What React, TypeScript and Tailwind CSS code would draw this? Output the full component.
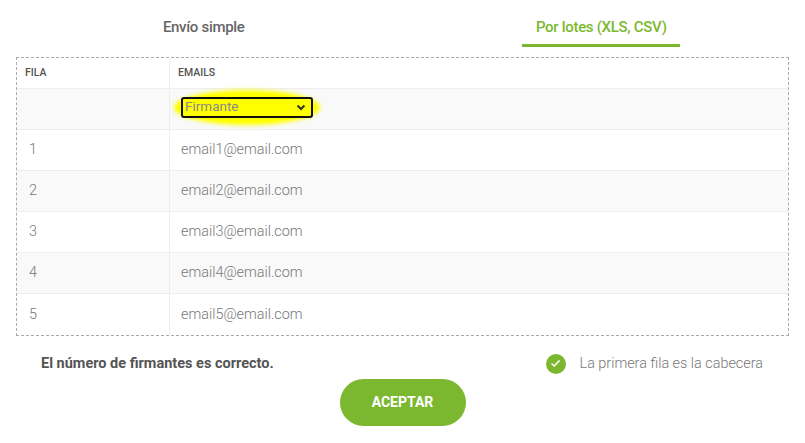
import React from "react";

const rows = [1, 2, 3, 4, 5];

export default function App() {
  return (
    <div
      className="w-[805px] h-[443px] bg-white overflow-hidden"
      style={{ fontFamily: "Roboto, 'Noto Sans', sans-serif" }}
    >
      {/* Tabs */}
      <div className="grid grid-cols-2 h-[47px] px-[5px]">
        <div className="flex flex-col items-center">
          <div className="h-[44px] flex items-center pt-[10px] text-[15px] font-medium text-[#666] tracking-[-0.3px]">
            Envío simple
          </div>
        </div>
        <div className="flex flex-col items-center">
          <div className="h-[44px] flex items-center pt-[10px] text-[15px] font-medium text-[#7cb82f] tracking-[-0.3px]">
            Por lotes (XLS, CSV)
          </div>
          <div className="w-[158px] h-[3px] bg-[#7cb82f]" />
        </div>
      </div>

      {/* Table */}
      <div className="mt-[10px] mx-[16px] w-[773px] border border-dashed border-[#aaa]">
        <div className="flex h-[31px] border-b border-[#eee] text-[10.5px] font-medium text-[#555] uppercase">
          <div className="w-[153px] border-r border-[#eee] flex items-center pl-[8px]">FILA</div>
          <div className="flex-1 flex items-center pl-[8px]">EMAILS</div>
        </div>
        <div className="flex h-[41px] border-b border-[#eee] bg-[#f9f9f9]">
          <div className="w-[153px] border-r border-[#eee]" />
          <div className="flex-1 flex items-center pl-[7px]">
            <div className="rounded-[50%] bg-[#ffff00] p-[4px] mb-[4px] shadow-[0_0_4px_3px_#ffff00]">
              <div className="w-[132px] h-[21px] rounded-[3px] border-2 border-[#111] bg-[#ffff00] flex items-center justify-between pl-[2px] pr-[5px]">
                <span className="text-[13.5px] text-[#888] leading-none">Firmante</span>
                <svg width="10" height="7" viewBox="0 0 10 7">
                  <path d="M1.5 1.5 L5 5 L8.5 1.5" fill="none" stroke="#333" strokeWidth="2" />
                </svg>
              </div>
            </div>
          </div>
        </div>
        {rows.map((n, i) => (
          <div
            key={n}
            className={`flex h-[41px] text-[14.4px] text-[#777] font-light ${i < 4 ? "border-b border-[#eee]" : ""} ${i % 2 === 1 ? "bg-[#f9f9f9]" : "bg-white"}`}
          >
            <div className="w-[153px] border-r border-[#eee] flex items-center pl-[12px]">{n}</div>
            <div className="flex-1 flex items-center pl-[11px]">email{n}@email.com</div>
          </div>
        ))}
      </div>

      {/* Footer */}
      <div className="flex items-center justify-between pl-[41px] pr-[42px] mt-[17px] h-[22px]">
        <span className="text-[14.5px] font-bold text-[#555]">El número de firmantes es correcto.</span>
        <div className="flex items-center gap-[14px]">
          <div className="w-[20px] h-[20px] rounded-full bg-[#7cb82f] flex items-center justify-center">
            <svg width="11" height="9" viewBox="0 0 11 9">
              <path d="M1.5 4.5 L4.2 7 L9.5 1.5" fill="none" stroke="#fff" strokeWidth="1.6" />
            </svg>
          </div>
          <span className="text-[14.4px] font-light text-[#777]">La primera fila es la cabecera</span>
        </div>
      </div>
      <div className="flex justify-center mt-[4px]">
        <button className="w-[126px] h-[47px] rounded-full bg-[#7cb82f] text-white text-[14px] font-bold">
          ACEPTAR
        </button>
      </div>
    </div>
  );
}
